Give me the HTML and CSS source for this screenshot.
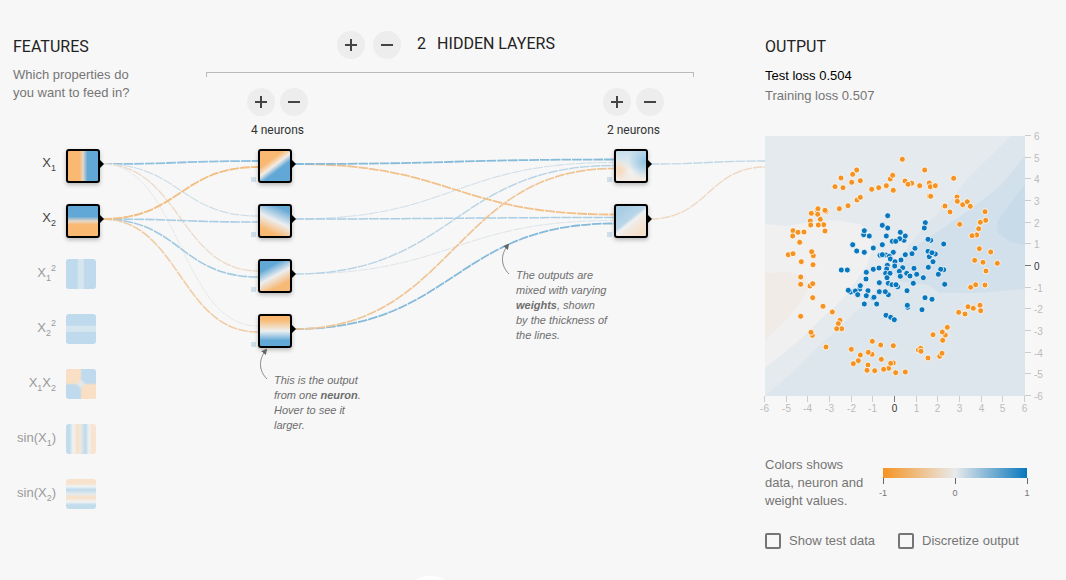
FILE: index.html
```html
<!DOCTYPE html>
<html lang="en">
<head>
<meta charset="utf-8">
<title>Neural network</title>
<link rel="stylesheet" href="styles.css">
</head>
<body>
<svg class="defs" aria-hidden="true">
  <symbol id="plus" viewBox="0 0 12 12"><path d="M0 6H12M6 0V12" stroke="#444" stroke-width="2"/></symbol>
  <symbol id="minus" viewBox="0 0 12 12"><path d="M0 6H12" stroke="#444" stroke-width="2"/></symbol>
</svg>
<main class="page">
  <section class="network">
    <div class="network-head">
      <div class="features">
        <h2>Features</h2>
        <p>Which properties do<br>you want to feed in?</p>
      </div>
      <div class="layers">
        <div class="layers-title">
          <button class="round" type="button" aria-label="Add layer"><svg class="icon"><use href="#plus"/></svg></button>
          <button class="round" type="button" aria-label="Remove layer"><svg class="icon"><use href="#minus"/></svg></button>
          <h2 class="layers-name"><span>2</span><span>Hidden layers</span></h2>
        </div>
        <div class="bracket"></div>
      </div>
      <div class="neurons">
        <div class="neuron-group">
          <div class="neuron-buttons">
            <button class="round" type="button" aria-label="Add neuron to layer 1"><svg class="icon"><use href="#plus"/></svg></button>
            <button class="round" type="button" aria-label="Remove neuron from layer 1"><svg class="icon"><use href="#minus"/></svg></button>
          </div>
          <div class="neuron-count">4 neurons</div>
        </div>
        <div class="neuron-group">
          <div class="neuron-buttons">
            <button class="round" type="button" aria-label="Add neuron to layer 2"><svg class="icon"><use href="#plus"/></svg></button>
            <button class="round" type="button" aria-label="Remove neuron from layer 2"><svg class="icon"><use href="#minus"/></svg></button>
          </div>
          <div class="neuron-count">2 neurons</div>
        </div>
      </div>
    </div>

    <svg class="diagram" viewBox="0 140 765 380">
      <defs>
        <linearGradient id="t-x1"><stop offset=".4" stop-color="#f9b972"/><stop offset=".5" stop-color="#e6d8c8"/><stop offset=".64" stop-color="#62a8d6"/></linearGradient>
        <linearGradient id="t-x2" x2="0" y2="1"><stop offset=".36" stop-color="#62a8d6"/><stop offset=".5" stop-color="#e6d8c8"/><stop offset=".62" stop-color="#f9b972"/></linearGradient>
        <linearGradient id="t-sq1"><stop offset=".37" stop-color="#bfdaec"/><stop offset=".42" stop-color="#d6e6ef"/><stop offset=".57" stop-color="#d6e6ef"/><stop offset=".62" stop-color="#bfdaec"/></linearGradient>
        <linearGradient id="t-sq2" x2="0" y2="1"><stop offset=".37" stop-color="#bfdaec"/><stop offset=".42" stop-color="#d6e6ef"/><stop offset=".57" stop-color="#d6e6ef"/><stop offset=".62" stop-color="#bfdaec"/></linearGradient>
        <linearGradient id="t-sin1"><stop offset=".12" stop-color="#c3dcec"/><stop offset=".24" stop-color="#f0f3f4"/><stop offset=".38" stop-color="#f9e0c6"/><stop offset=".48" stop-color="#eee8e0"/><stop offset=".65" stop-color="#bfdaec"/><stop offset=".77" stop-color="#eef2f4"/><stop offset=".86" stop-color="#f8e4d0"/></linearGradient>
        <linearGradient id="t-sin2" x2="0" y2="1"><stop offset=".14" stop-color="#f8e2cb"/><stop offset=".25" stop-color="#eef2f4"/><stop offset=".36" stop-color="#bfdaec"/><stop offset=".5" stop-color="#e5eaec"/><stop offset=".62" stop-color="#f9e0c6"/><stop offset=".76" stop-color="#f0f3f4"/><stop offset=".86" stop-color="#c3dcec"/></linearGradient>
        <linearGradient id="t-h1" x1=".34" y1=".26" x2=".66" y2=".68"><stop offset=".12" stop-color="#f9b972"/><stop offset=".5" stop-color="#f3ece6"/><stop offset=".85" stop-color="#62a8d6"/></linearGradient>
        <linearGradient id="t-h2" x1=".68" y1=".1" x2=".34" y2=".84"><stop offset="0" stop-color="#69abd7"/><stop offset=".52" stop-color="#eceef0"/><stop offset="1" stop-color="#f9b972"/></linearGradient>
        <linearGradient id="t-h3" x1=".35" y1=".2" x2=".67" y2=".8"><stop offset="0" stop-color="#62a8d6"/><stop offset=".48" stop-color="#eceef0"/><stop offset="1" stop-color="#f7b976"/></linearGradient>
        <linearGradient id="t-h4" x2="0" y2="1"><stop offset=".15" stop-color="#f9b972"/><stop offset=".5" stop-color="#edf0f1"/><stop offset=".8" stop-color="#62a8d6"/></linearGradient>
        <linearGradient id="t-o1" x2="0" y2="1"><stop offset="0" stop-color="#c5deec"/><stop offset=".45" stop-color="#e1eaef"/><stop offset=".65" stop-color="#f2f2f1"/><stop offset="1" stop-color="#f2eae1"/></linearGradient>
        <radialGradient id="t-o1a" cx=".98" cy=".35" r=".58"><stop offset="0" stop-color="#8fc1e0"/><stop offset=".35" stop-color="#a9cfe6"/><stop offset="1" stop-color="#a9cfe6" stop-opacity="0"/></radialGradient>
        <radialGradient id="t-o1b" cx=".1" cy=".66" r=".4"><stop offset="0" stop-color="#f6d9bb"/><stop offset=".4" stop-color="#f5e0cc"/><stop offset="1" stop-color="#f3e9e0" stop-opacity="0"/></radialGradient>
        <linearGradient id="t-o2" x1=".2" y1=".16" x2=".76" y2=".86"><stop offset="0" stop-color="#a9cde5"/><stop offset=".42" stop-color="#b9d6e9"/><stop offset=".54" stop-color="#f0f1f1"/><stop offset=".68" stop-color="#f1e9e2"/><stop offset="1" stop-color="#f5e1cb"/></linearGradient>
        <radialGradient id="t-mid"><stop offset="0" stop-color="#e9eaea"/><stop offset=".4" stop-color="#e4e6e7"/><stop offset="1" stop-color="#e6e6e6" stop-opacity="0"/></radialGradient>
        <clipPath id="tile-clip"><rect x="66" y="369" width="30" height="30" rx="3"/></clipPath>
        <marker id="arrow" viewBox="0 0 6 6" refX="4" refY="3" markerWidth="6" markerHeight="6" markerUnits="userSpaceOnUse" orient="auto"><path d="M0 0L6 3L0 6Z" fill="#666"/></marker>
      </defs>

      <g class="links">
        <path d="M102 164C180 164 180 161 258 161" stroke="#8fc0df" stroke-width="1.8"/>
        <path d="M102 164C180 164 180 216 258 216" stroke="#cddde7" stroke-width="1.2"/>
        <path d="M102 164C180 164 180 271 258 271" stroke="#ecdac8" stroke-width="1.3"/>
        <path d="M102 164C180 164 180 326 258 326" stroke="#e6e8e9" stroke-width="1"/>
        <path d="M102 219C180 219 180 222 258 222" stroke="#a9cde4" stroke-width="1.6"/>
        <path d="M102 219C180 219 180 277 258 277" stroke="#a1c9e2" stroke-width="1.6"/>
        <path d="M102 219C180 219 180 332 258 332" stroke="#f0cda5" stroke-width="1.6"/>
        <path d="M102 219C180 219 180 167 258 167" stroke="#f2be82" stroke-width="1.9"/>
        <path d="M294 219C454 219 454 162.500 614 162.500" stroke="#d2dfe8" stroke-width="1.1"/>
        <path d="M294 274C454 274 454 220.500 614 220.500" stroke="#dde4e8" stroke-width="1"/>
        <path d="M294 274C454 274 454 165.500 614 165.500" stroke="#b7d3e5" stroke-width="1.4"/>
        <path d="M294 219C454 219 454 217.500 614 217.500" stroke="#a9cde4" stroke-width="1.5"/>
        <path d="M294 164C454 164 454 214.500 614 214.500" stroke="#f2c18a" stroke-width="1.8"/>
        <path d="M294 164C454 164 454 159.500 614 159.500" stroke="#85bada" stroke-width="1.8"/>
        <path d="M294 329C454 329 454 223.500 614 223.500" stroke="#85bada" stroke-width="1.8"/>
        <path d="M294 329C454 329 454 168.500 614 168.500" stroke="#f0c596" stroke-width="1.7"/>
        <path d="M650 164C708 164 708 161 766 161" stroke="#bfd8e7" stroke-width="1.4"/>
        <path d="M650 219C708 219 708 167 766 167" stroke="#efd8bf" stroke-width="1.4"/>
      </g>

      <g class="biases">
        <rect x="251" y="177" width="5" height="5"/><rect x="251" y="232" width="5" height="5"/>
        <rect x="251" y="287" width="5" height="5"/><rect x="251" y="342" width="5" height="5"/>
        <rect x="607" y="177" width="5" height="5"/><rect x="607" y="232" width="5" height="5"/>
      </g>

      <g class="ports">
        <path d="M100 160V168L104 164Z"/><path d="M100 215V223L104 219Z"/>
        <path d="M292 160V168L296 164Z"/><path d="M292 215V223L296 219Z"/>
        <path d="M292 270V278L296 274Z"/><path d="M292 325V333L296 329Z"/>
        <path d="M648 160V168L652 164Z"/><path d="M648 215V223L652 219Z"/>
      </g>

      <g class="nodes">
        <rect x="67" y="150" width="32" height="32" rx="2" fill="url(#t-x1)"/>
        <rect x="67" y="205" width="32" height="32" rx="2" fill="url(#t-x2)"/>
        <rect x="259" y="150" width="32" height="32" rx="2" fill="url(#t-h1)"/>
        <rect x="259" y="205" width="32" height="32" rx="2" fill="url(#t-h2)"/>
        <rect x="259" y="260" width="32" height="32" rx="2" fill="url(#t-h3)"/>
        <rect x="259" y="315" width="32" height="32" rx="2" fill="url(#t-h4)"/>
        <rect x="615" y="150" width="32" height="32" rx="2" fill="url(#t-o1)"/>
        <rect x="615" y="205" width="32" height="32" rx="2" fill="url(#t-o2)"/>
      </g>
      <rect x="616" y="151" width="30" height="30" fill="url(#t-o1a)"/>
      <rect x="616" y="151" width="30" height="30" fill="url(#t-o1b)"/>

      <rect x="66" y="259" width="30" height="30" rx="3" fill="url(#t-sq1)"/>
      <rect x="66" y="314" width="30" height="30" rx="3" fill="url(#t-sq2)"/>
      <g clip-path="url(#tile-clip)">
        <rect x="66" y="369" width="30" height="30" fill="#bfdaec"/>
        <path d="M66 369H81V384H66ZM81 384H96V399H81Z" fill="#f9dfc3"/>
        <path d="M81 369V399M66 384H96" stroke="#e0dedb" stroke-width="1"/>
        <circle cx="81" cy="384" r="5" fill="url(#t-mid)"/>
      </g>
      <rect x="66" y="424" width="30" height="30" rx="3" fill="url(#t-sin1)"/>
      <rect x="66" y="479" width="30" height="30" rx="3" fill="url(#t-sin2)"/>

      <g class="labels">
        <text class="on" x="56" y="167">X<tspan class="small" dy="4">1</tspan></text>
        <text class="on" x="56" y="222">X<tspan class="small" dy="4">2</tspan></text>
        <text x="51" y="277">X<tspan class="small" dy="4">1</tspan></text>
        <text class="small" x="56" y="271">2</text>
        <text x="51" y="332">X<tspan class="small" dy="4">2</tspan></text>
        <text class="small" x="56" y="326">2</text>
        <text x="56" y="387">X<tspan class="small" dy="4">1</tspan><tspan dy="-4">X</tspan><tspan class="small" dy="4">2</tspan></text>
        <text x="56" y="442">sin(X<tspan class="small" dy="4">1</tspan><tspan dy="-4">)</tspan></text>
        <text x="56" y="497">sin(X<tspan class="small" dy="4">2</tspan><tspan dy="-4">)</tspan></text>
      </g>

      <g class="callouts">
        <path d="M267 379C259 371 258 360 266 350" marker-end="url(#arrow)"/>
        <text><tspan x="274" y="384">This is the output</tspan><tspan x="274" y="399">from one <tspan class="strong">neuron</tspan>.</tspan><tspan x="274" y="414">Hover to see it</tspan><tspan x="274" y="429">larger.</tspan></text>
        <path d="M509 274C501 266 500 255 508 245" marker-end="url(#arrow)"/>
        <text><tspan x="516" y="279">The outputs are</tspan><tspan x="516" y="294">mixed with varying</tspan><tspan class="strong" x="516" y="309">weights</tspan>, shown<tspan x="516" y="324">by the thickness of</tspan><tspan x="516" y="339">the lines.</tspan></text>
      </g>
    </svg>
  </section>

  <section class="output">
    <h2>Output</h2>
    <div class="loss test">Test loss 0.504</div>
    <div class="loss">Training loss 0.507</div>
    <svg class="plot" viewBox="0 0 284 280">
      <rect width="260" height="260" fill="#dce6ec"/>
      <path d="M0 0H246L228 18L205 40L183 68L160 90L142 112L125 132L108 160L78 188L50 214L28 236L0 260Z" fill="#e5eaee"/>
      <path d="M0 88L22 90L45 86L70 84L95 88L105 97L108 110L102 130L78 163L55 184L38 201L20 216L0 232Z" fill="#eff0ef"/>
      <path d="M0 137L25 136L41 141L44 150L36 166L20 185L0 205Z" fill="#f0ebe6"/>
      <path d="M260 20L235 50L215 66L190 84L160 104L138 118L126 132L134 145L163 149L175 157L215 157L260 153Z" fill="#d2e0eb"/>
      <path d="M260 49L245 67L232 86L233 97L245 106L260 109Z" fill="#c8dbe9"/>
      <g id="dots"></g>
      <g id="axes"></g>
    </svg>
    <div class="legend">
      <p>Colors shows<br>data, neuron and<br>weight values.</p>
      <div class="scale">
        <div class="ramp"></div>
        <div class="ramp-ticks"><span>-1</span><span>0</span><span>1</span></div>
      </div>
    </div>
    <div class="options">
      <label><input type="checkbox">Show test data</label>
      <label><input type="checkbox">Discretize output</label>
    </div>
  </section>
</main>
<footer class="more"><div class="more-disc"></div></footer>
<script src="plot.js"></script>
</body>
</html>
```
FILE: styles.css
```css
* {
  box-sizing: border-box;
}

body {
  margin: 0;
  background: #f7f7f7;
  color: #757575;
  font: 13px/18px "Liberation Sans", Arial, sans-serif;
}

h2 {
  margin: 0;
  color: #222;
  font: 400 16px/20px Roboto, sans-serif;
  text-transform: uppercase;
}

p {
  margin: 0;
}

.defs {
  display: none;
}

.page {
  display: grid;
  grid-template-columns: minmax(0, 1fr) 301px;
  min-height: 576px;
}

.network-head {
  display: grid;
  grid-template-columns: 206fr 488fr 71fr;
  padding-top: 31px;
}

.features {
  grid-row: 1 / 3;
  padding: 6px 0 0 13px;
}

.features p {
  margin-top: 9px;
}

.layers {
  grid-column: 2;
}

.layers-title {
  display: flex;
  justify-content: center;
  gap: 8px;
  padding-right: 8px;
  margin-bottom: 13px;
}

.layers-name {
  display: flex;
  gap: 11px;
  padding-left: 8px;
  line-height: 26px;
}

.bracket {
  height: 5px;
  border: 1px solid #bbb;
  border-bottom: 0;
}

.round {
  display: flex;
  align-items: center;
  justify-content: center;
  width: 28px;
  height: 28px;
  padding: 0;
  border: 0;
  border-radius: 50%;
  background: #ededed;
}

.icon {
  width: 12px;
  height: 12px;
}

.neurons {
  grid-column: 2 / 4;
  display: grid;
  grid-template-columns: 41fr 356fr 162fr;
  padding-top: 11px;
}

.neuron-group {
  justify-self: start;
}

.neuron-group:first-child {
  grid-column: 2;
}

.neuron-buttons {
  display: flex;
  gap: 5px;
}

.neuron-count {
  padding-top: 4px;
  color: #333;
  font: 12px/20px Roboto, sans-serif;
  text-align: center;
}

.diagram {
  display: block;
  width: 100%;
}

.links path {
  fill: none;
  stroke-dasharray: 9.7 1;
}

.biases {
  fill: #cfdfea;
}

.nodes rect {
  stroke: #000;
  stroke-width: 2;
  filter: drop-shadow(0 2px 2px rgba(0, 0, 0, 0.25));
}

.labels {
  fill: #999;
  font-size: 13px;
  text-anchor: end;
}

.labels .on {
  fill: #444;
}

.labels .small {
  font-size: 9px;
}

.callouts path {
  fill: none;
  stroke: #888;
}

.callouts text {
  fill: #6e6e6e;
  font-size: 11px;
  font-style: italic;
}

.strong {
  font-weight: bold;
}

.output {
  padding-top: 37px;
}

.loss {
  line-height: 20px;
}

.test {
  margin-top: 9px;
  color: #000;
}

.plot {
  display: block;
  width: 284px;
  margin-top: 30px;
  overflow: visible;
}

.dot {
  stroke: #fff;
  stroke-width: 1;
  stroke-opacity: 0.8;
}

.orange {
  fill: #f59322;
}

.blue {
  fill: #0877bd;
}

.tick {
  stroke: #ccc;
}

.tick-label {
  fill: #bbb;
  font-size: 10px;
}

.tick.zero {
  stroke: #777;
}

.tick-label.zero {
  fill: #333;
}

.middle {
  text-anchor: middle;
}

.legend {
  display: flex;
  justify-content: space-between;
  padding: 40px 39px 0 0;
}

.scale {
  width: 144px;
  padding-top: 12px;
}

.ramp {
  height: 10px;
  background: linear-gradient(to right, #f59322, #e8eaeb, #0877bd);
}

.ramp-ticks {
  display: flex;
  justify-content: space-between;
  margin: 0 -10px;
  font-size: 9px;
  line-height: 18px;
}

.ramp-ticks span {
  width: 20px;
  text-align: center;
}

.ramp-ticks span::before {
  content: "";
  display: block;
  width: 1px;
  height: 6px;
  margin: 0 auto;
  background: #666;
}

.options {
  display: flex;
  gap: 23px;
  padding-top: 22px;
}

.options label {
  display: flex;
  align-items: center;
  gap: 8px;
}

.options input {
  appearance: none;
  width: 16px;
  height: 16px;
  margin: 0;
  border: 2px solid #757575;
  border-radius: 2px;
}

.more {
  height: 4px;
  overflow: hidden;
}

.more-disc {
  width: 60px;
  height: 60px;
  margin-left: 400px;
  border-radius: 50%;
  background: #fff;
}
```
FILE: plot.js
```js
// Data points in plot pixels: "x,y" pairs.
const points = {
  orange: `137.3,23.3 91.7,34 87.7,38.3 76,42 86.7,46.3 95.3,44.7 70,50.7 78,51.7 106.7,53.3 113.7,51.7
    121.3,49.7 125.3,43 127.7,39.3 128.3,54.3 146.7,47.3 140,45 143,48.3 92,64 95.3,61.3 83,69.7 74.3,72.7
    46.3,77.3 52,74 53,72.7 52.7,78.3 61,75.5 60,74.3 55.3,83.3 45.3,85 45.7,89 58.7,88.7 53.3,89 60,95
    28,94.7 27.7,100 33,96.3 39,96 34.7,106.3 23.3,118.7 28,117.7 48.3,119.7 46.7,115.7 36.3,125.7 48,128.7
    159.7,34 154.7,49.7 164.3,47 165.3,50.7 170.3,49.7 164.5,60 165.7,60.3 188.7,42.3 192,61 192.3,65.3
    197.7,68.7 202.3,65.7 205.3,70.3 179,70.5 180,70 185,76 194.7,88.3 220,75.7 220.7,84.3 215.3,86.3
    213.7,92.7 211.7,99 207,99.7 214.3,112.7 225.7,116 209.7,124.3 218,126.3 232.3,127.3 221,135
    35.7,141 35.7,148.3 45,150 47.7,147.7 47.7,161.7 58,170.3 35.7,180.3 67.3,176 75,184.3 73.3,187.7
    76.7,192.7 71.7,192.7 47.3,199.3 46,196.3 61,211 86.3,213.3 107.3,205.3 115.7,209 128.3,209.7
    107,218.3 103.3,216.3 95.3,219 93.3,224.7 88.3,227.7 116.3,223.3 103,229 102,234.3 109.7,234.7
    123.7,232.3 118.7,233.3 128.3,227 125.7,227.3 130.7,236.7 140.3,236 205.7,151.3 210.7,148.7 220,149
    203,170.7 208.3,172.3 215,169.3 215.7,174.7 193.7,176.3 200,178 182.3,191.3 180.3,199 177.3,196
    168,198.7 177.7,204.3 153.3,214 155.7,212.3 156,215.3 174.7,220.3 177,217.3 163,222`,
  blue: `122.7,79.7 117.3,89.3 122.7,92 98.7,98.7 99.3,94.7 104.3,100 121.3,100 135.3,96.3 139,104.3
    140.3,100 134.7,102.7 127.3,105.3 130.7,105.3 117.3,108.7 87.7,108.7 108.3,112 91.7,115 99.3,116.3
    115,119.3 121,119 117.3,118.7 128.3,116.3 124.3,120.3 140.3,118.7 125.3,123 136,124 130,125.7
    122.3,129.3 121.7,133 129.7,130 137.7,131.7 76.3,134 82.3,134 108.3,133.3 114,132 101.3,136.3
    120.7,137.3 125,137.3 134.3,135.3 141.7,137.3 160.3,86.7 159.3,92 165.7,104.3 163,103.3 178.7,108
    150,112.3 147,117.7 163,115.3 170.3,118 164.3,120.7 167,116.7 168,125.7 163.3,131.3 149,132.3
    178.7,133.7 175.7,133.3 173.3,138.3 151.7,138.3 101,143 114.3,146.7 94.7,153 95.3,149.7 85.7,156
    83.3,154.3 90.3,155 103,154.7 92.7,158.7 101.3,159.7 108,162 109,161.3 114.3,155.7 123.3,158.7
    120.3,155.7 99.3,168 111.7,168 123.3,147.3 127,148.7 132.7,150.7 131,148.7 122,141.7 135.3,140.3
    142,154.7 142.7,171.3 142.3,169.3 121,179.3 125.7,181.3 129.3,183.7 145,140 158.3,141.7 148.3,147.3
    179.7,148.3 160,161.7 167,163.3 157,173.7`
};

function add(parent, tag, attrs, text) {
  const el = document.createElementNS("http://www.w3.org/2000/svg", tag);
  for (const name in attrs) el.setAttribute(name, attrs[name]);
  if (text !== undefined) el.textContent = text;
  parent.appendChild(el);
}

const dots = document.getElementById("dots");
for (const color in points) {
  for (const pair of points[color].split(/\s+/)) {
    const [cx, cy] = pair.split(",");
    add(dots, "circle", { class: "dot " + color, cx, cy, r: 3 });
  }
}

const axes = document.getElementById("axes");
for (let v = -6; v <= 6; v++) {
  const zero = v === 0 ? " zero" : "";
  const x = Math.round((v + 6) * 260 / 12) - 0.5;
  const y = Math.round((6 - v) * 260 / 12) - 0.5;
  add(axes, "line", { class: "tick" + zero, x1: x, x2: x, y1: 260, y2: 266 });
  add(axes, "text", { class: "tick-label middle" + zero, x: x, y: 276 }, v);
  add(axes, "line", { class: "tick" + zero, x1: 260, x2: 266, y1: y, y2: y });
  add(axes, "text", { class: "tick-label" + zero, x: 269, y: y + 4 }, v);
}
```
